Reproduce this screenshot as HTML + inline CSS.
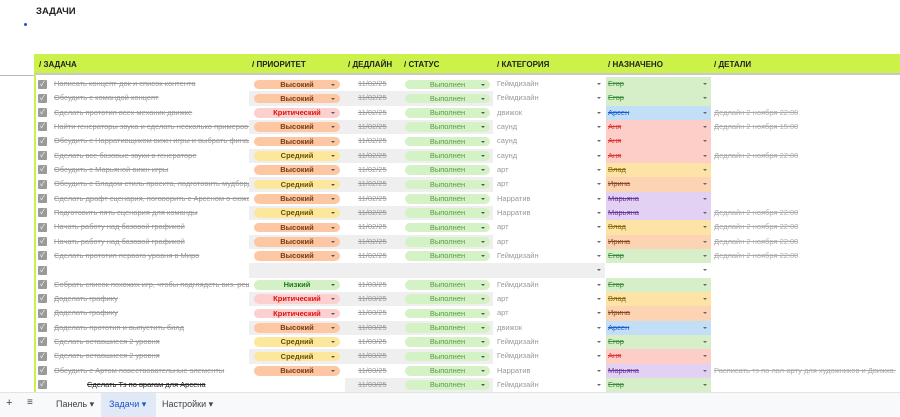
<!DOCTYPE html>
<html><head><meta charset="utf-8"><style>
*{margin:0;padding:0;box-sizing:border-box}
body{width:900px;height:416px;overflow:hidden;background:#fff;font-family:"Liberation Sans","Noto Sans CJK SC",sans-serif;position:relative}
.title{position:absolute;left:36px;top:6px;font-size:9.5px;font-weight:bold;color:#222}
.dot{position:absolute;left:24px;top:23px;width:3px;height:3px;border-radius:50%;background:#1a55e0}
.hdr{position:absolute;left:34px;top:54px;width:866px;height:21px;background:#ccf24a;border-bottom:2px solid #c8c8c8}
.hdr span{position:absolute;top:6px;font-size:8px;font-weight:bold;color:#222}
.hl{position:absolute;left:0;top:75px;width:34px;height:1px;background:#bbb}
.vl{position:absolute;left:34px;top:75px;width:2px;height:318px;background:#ccf24a}
.rows{position:absolute;left:0;top:77px;width:900px}
.r{position:relative;height:14.33px;font-size:7.5px;color:#999}
.r>*{position:absolute;top:0;height:14.33px;line-height:14.33px;white-space:nowrap;overflow:hidden}
.cb{left:38px!important;top:2.5px!important;width:9px;height:9px!important;background:#9a9a9a;border-radius:1px;color:#fff;font-size:7px;line-height:9px!important;text-align:center}
.t{left:54px;width:195px;text-decoration:line-through}
.pc{left:249px;width:96px}
.g .pc,.g .sc,.g .dl{background:#efefef}
.p{position:absolute;left:5px;top:2.5px;width:86px;height:9.5px;border-radius:5px;line-height:9.5px;text-align:center;font-weight:bold;font-size:7.5px}
.p:after{content:"";position:absolute;right:5px;top:4px;border:2px solid transparent;border-top:2.5px solid #555}
.hi{background:#fdc7a4;color:#7a3a10}
.cr{background:#fdd0d0;color:#d11}
.md{background:#fde79c;color:#6a5000}
.lo{background:#d4f1c5;color:#1d7a1d}
.dl{left:345px;width:55px;padding-left:13px;text-decoration:line-through}
.sc{left:400px;width:93px}
.s{position:absolute;left:5px;top:2.5px;width:85px;height:9.5px;border-radius:5px;background:#d5f2c6;color:#5a9a4a;line-height:9.5px;text-align:center;font-size:7.5px}
.s:after{content:"";position:absolute;right:5px;top:4px;border:2px solid transparent;border-top:2.5px solid #555}
.c{left:493px;width:112px;padding-left:4px}
.c:after,.a:after{content:"";position:absolute;right:4px;top:6px;border:2px solid transparent;border-top:2.5px solid #666}
.a{left:606px;width:105px;padding-left:2px;text-decoration:line-through}
.eg{background:#d6efc9;color:#3a8a3a}
.ar{background:#c3dff7;color:#1c5bd0}
.an{background:#fdcdc7;color:#d33}
.vd{background:#fde4a6;color:#8a6a10}
.ir{background:#fdd4b3;color:#8a4a20}
.mr{background:#e2d1f2;color:#6a3a9a}
.d{left:714px;text-decoration:line-through;color:#aaa}
.bot{position:absolute;left:0;top:392px;width:900px;height:24px;background:#f8f9fa;border-top:1px solid #e3e3e3;font-size:9px;color:#444}
.bot span{position:absolute;top:6px}
.tab{position:absolute;left:101px;top:0;width:55px;height:24px;background:#e1e9f7}
</style></head><body>
<div class="title">ЗАДАЧИ</div><div class="dot"></div>
<div class="hdr"><span style="left:5px">/ ЗАДАЧА</span><span style="left:218px">/ ПРИОРИТЕТ</span><span style="left:314px">/ ДЕДЛАЙН</span><span style="left:370px">/ СТАТУС</span><span style="left:463px">/ КАТЕГОРИЯ</span><span style="left:574px">/ НАЗНАЧЕНО</span><span style="left:680px">/ ДЕТАЛИ</span></div>
<div class="hl"></div><div class="vl"></div>
<div class="rows">
<div class="r"><div class="cb">✓</div><div class="t">Написать концепт-док и список контента</div><div class="pc"><div class="p hi">Высокий</div></div><div class="dl">11/02/25</div><div class="sc"><div class="s">Выполнен</div></div><div class="c">Геймдизайн</div><div class="a eg">Егор</div></div>
<div class="r g"><div class="cb">✓</div><div class="t">Обсудить с командой концепт</div><div class="pc"><div class="p hi">Высокий</div></div><div class="dl">11/02/25</div><div class="sc"><div class="s">Выполнен</div></div><div class="c">Геймдизайн</div><div class="a eg">Егор</div></div>
<div class="r"><div class="cb">✓</div><div class="t">Сделать прототип всех механик движке</div><div class="pc"><div class="p cr">Критический</div></div><div class="dl">11/02/25</div><div class="sc"><div class="s">Выполнен</div></div><div class="c">движок</div><div class="a ar">Арсен</div><div class="d">Дедлайн 2 ноября 22:00</div></div>
<div class="r g"><div class="cb">✓</div><div class="t">Найти генераторы звука и сделать несколько примеров звуков</div><div class="pc"><div class="p hi">Высокий</div></div><div class="dl">11/02/25</div><div class="sc"><div class="s">Выполнен</div></div><div class="c">саунд</div><div class="a an">Аня</div><div class="d">Дедлайн 2 ноября 15:00</div></div>
<div class="r"><div class="cb">✓</div><div class="t">Обсудить с Нарративщиком вижн игры и выбрать финал</div><div class="pc"><div class="p hi">Высокий</div></div><div class="dl">11/02/25</div><div class="sc"><div class="s">Выполнен</div></div><div class="c">саунд</div><div class="a an">Аня</div></div>
<div class="r g"><div class="cb">✓</div><div class="t">Сделать все базовые звуки в генераторе</div><div class="pc"><div class="p md">Средний</div></div><div class="dl">11/02/25</div><div class="sc"><div class="s">Выполнен</div></div><div class="c">саунд</div><div class="a an">Аня</div><div class="d">Дедлайн 2 ноября 22:00</div></div>
<div class="r"><div class="cb">✓</div><div class="t">Обсудить с Марьяной вижн игры</div><div class="pc"><div class="p hi">Высокий</div></div><div class="dl">11/02/25</div><div class="sc"><div class="s">Выполнен</div></div><div class="c">арт</div><div class="a vd">Влад</div></div>
<div class="r g"><div class="cb">✓</div><div class="t">Обсудить с Владом стиль проекта, подготовить мудборд</div><div class="pc"><div class="p md">Средний</div></div><div class="dl">11/02/25</div><div class="sc"><div class="s">Выполнен</div></div><div class="c">арт</div><div class="a ir">Ирина</div></div>
<div class="r"><div class="cb">✓</div><div class="t">Сделать драфт сценария, поговорить с Арсеном о сюжете</div><div class="pc"><div class="p hi">Высокий</div></div><div class="dl">11/02/25</div><div class="sc"><div class="s">Выполнен</div></div><div class="c">Нарратив</div><div class="a mr">Марьяна</div></div>
<div class="r g"><div class="cb">✓</div><div class="t">Подготовить пять сценария для команды</div><div class="pc"><div class="p md">Средний</div></div><div class="dl">11/02/25</div><div class="sc"><div class="s">Выполнен</div></div><div class="c">Нарратив</div><div class="a mr">Марьяна</div><div class="d">Дедлайн 2 ноября 22:00</div></div>
<div class="r"><div class="cb">✓</div><div class="t">Начать работу над базовой графикой</div><div class="pc"><div class="p hi">Высокий</div></div><div class="dl">11/02/25</div><div class="sc"><div class="s">Выполнен</div></div><div class="c">арт</div><div class="a vd">Влад</div><div class="d">Дедлайн 2 ноября 22:00</div></div>
<div class="r g"><div class="cb">✓</div><div class="t">Начать работу над базовой графикой</div><div class="pc"><div class="p hi">Высокий</div></div><div class="dl">11/02/25</div><div class="sc"><div class="s">Выполнен</div></div><div class="c">арт</div><div class="a ir">Ирина</div><div class="d">Дедлайн 2 ноября 22:00</div></div>
<div class="r"><div class="cb">✓</div><div class="t">Сделать прототип первого уровня в Миро</div><div class="pc"><div class="p hi">Высокий</div></div><div class="dl">11/02/25</div><div class="sc"><div class="s">Выполнен</div></div><div class="c">Геймдизайн</div><div class="a eg">Егор</div><div class="d">Дедлайн 2 ноября 22:00</div></div>
<div class="r g"><div class="cb">✓</div><div class="pc"></div><div class="dl"></div><div class="sc"></div><div class="c" style="background:#efefef"></div><div class="a"></div></div>
<div class="r"><div class="cb">✓</div><div class="t">Собрать список похожих игр, чтобы подглядеть виз. решения</div><div class="pc"><div class="p lo">Низкий</div></div><div class="dl">11/03/25</div><div class="sc"><div class="s">Выполнен</div></div><div class="c">Геймдизайн</div><div class="a eg">Егор</div></div>
<div class="r g"><div class="cb">✓</div><div class="t">Доделать графику</div><div class="pc"><div class="p cr">Критический</div></div><div class="dl">11/03/25</div><div class="sc"><div class="s">Выполнен</div></div><div class="c">арт</div><div class="a vd">Влад</div></div>
<div class="r"><div class="cb">✓</div><div class="t">Доделать графику</div><div class="pc"><div class="p cr">Критический</div></div><div class="dl">11/03/25</div><div class="sc"><div class="s">Выполнен</div></div><div class="c">арт</div><div class="a ir">Ирина</div></div>
<div class="r g"><div class="cb">✓</div><div class="t">Доделать прототип и выпустить билд</div><div class="pc"><div class="p hi">Высокий</div></div><div class="dl">11/03/25</div><div class="sc"><div class="s">Выполнен</div></div><div class="c">движок</div><div class="a ar">Арсен</div></div>
<div class="r"><div class="cb">✓</div><div class="t">Сделать оставшиеся 2 уровня</div><div class="pc"><div class="p md">Средний</div></div><div class="dl">11/03/25</div><div class="sc"><div class="s">Выполнен</div></div><div class="c">Геймдизайн</div><div class="a eg">Егор</div></div>
<div class="r g"><div class="cb">✓</div><div class="t">Сделать оставшиеся 2 уровня</div><div class="pc"><div class="p md">Средний</div></div><div class="dl">11/03/25</div><div class="sc"><div class="s">Выполнен</div></div><div class="c">Геймдизайн</div><div class="a an">Аня</div></div>
<div class="r"><div class="cb">✓</div><div class="t">Обсудить с Артом повествовательные элементы</div><div class="pc"><div class="p hi">Высокий</div></div><div class="dl">11/03/25</div><div class="sc"><div class="s">Выполнен</div></div><div class="c">Нарратив</div><div class="a mr">Марьяна</div><div class="d">Расписать тз по лвл-арту для художников и Движка.</div></div>
<div class="r g"><div class="cb">✓</div><div class="t" style="color:#222;padding-left:33px">Сделать Тз по врагам для Арсена</div><div class="pc" style="background:none"></div><div class="dl">11/03/25</div><div class="sc"><div class="s">Выполнен</div></div><div class="c">Геймдизайн</div><div class="a eg">Егор</div></div>
</div>
<div class="bot"><div class="tab"></div><span style="left:6px;font-size:11px;top:4px">+</span><span style="left:27px;font-size:10px;top:4px">≡</span><span style="left:56px">Панель ▾</span><span style="left:109px;color:#1a55d0">Задачи ▾</span><span style="left:162px">Настройки ▾</span></div>
</body></html>
